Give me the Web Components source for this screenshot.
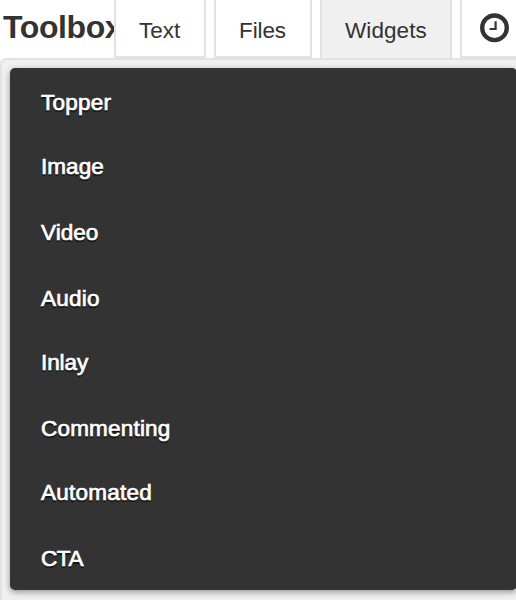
<!DOCTYPE html>
<html lang="en"><head><meta charset="utf-8"><title>Toolbox</title>
<style>
html,body{margin:0;height:600px;overflow:hidden;background:#fff;color:#333;font-family:"Liberation Sans",Arial,sans-serif}
</style></head><body>
<tool-box>
<tool-tab slot="tabs" style="--w:92px">Text</tool-tab>
<tool-tab slot="tabs" style="--w:98px;--ls:-.1px">Files</tool-tab>
<tool-tab slot="tabs" active style="--w:132px;--ls:.08px">Widgets</tool-tab>
<tool-tab slot="tabs" style="--w:70px;--pad:18px"><clock-icon></clock-icon></tool-tab>
<tool-menu>
<menu-row style="--h:64px;--ls:.25px">Topper</menu-row>
<menu-row style="--h:66px;--ls:.05px">Image</menu-row>
<menu-row style="--h:66px;--ls:.05px">Video</menu-row>
<menu-row style="--h:64px;--ls:.25px">Audio</menu-row>
<menu-row style="--h:66px;--ls:-.1px">Inlay</menu-row>
<menu-row style="--h:64px;--ls:.2px">Commenting</menu-row>
<menu-row style="--h:66px;--ls:.25px">Automated</menu-row>
<menu-row style="--h:64px;--ls:-.4px">CTA</menu-row>
</tool-menu>
</tool-box>
<script>
const define=(name,html)=>customElements.define(name,class extends HTMLElement{
  constructor(){super();this.attachShadow({mode:"open"}).innerHTML=html;}
});
define("tool-box",`<style>
:host{display:flex;flex-direction:column;height:600px;width:516px;overflow:hidden}
header{display:flex;height:58px;flex:none}
h1{margin:0;padding-left:3px;width:111px;flex:none;overflow:hidden;font:bold 32px/54px "Liberation Sans",Arial,sans-serif;letter-spacing:-.4px;white-space:nowrap}
nav{display:flex;gap:8px;flex:none}
main{box-sizing:border-box;flex:1;width:525px;border:2px solid #e2e2e2;border-bottom:0;border-radius:6px 6px 0 0;background:#f0f0f0;padding:8px}
</style><header><h1>Toolbox</h1><nav><slot name="tabs"></slot></nav></header><main><slot></slot></main>`);
define("tool-tab",`<style>
:host{box-sizing:border-box;display:block;width:var(--w);height:58px;padding-left:var(--pad,23px);border:2px solid #e2e2e2;border-top:0;background:#fff;font-size:22.5px;line-height:61px;letter-spacing:var(--ls,0);white-space:nowrap}
:host([active]){background:#f0f0f0;border-bottom-width:0}
</style><slot></slot>`);
define("clock-icon",`<style>:host{display:block;width:30px;height:30px;padding-top:13px}svg{display:block}</style>
<svg width="30" height="30" viewBox="0 0 30 30" fill="none" stroke="#333"><circle cx="14.5" cy="14.8" r="12.3" stroke-width="4.3"/><path d="M15.6 8.2V16H9.6" stroke-width="2.2"/></svg>`);
define("tool-menu",`<style>:host{display:block;box-sizing:border-box;width:507px;height:522px;padding-top:2px;border-radius:5px;background:#333;box-shadow:0 2px 6px rgba(0,0,0,.4)}</style><slot></slot>`);
define("menu-row",`<style>:host{display:block;height:var(--h);padding-left:31px;color:#fff;font-size:22.5px;line-height:66px;letter-spacing:var(--ls);-webkit-text-stroke:.7px #fff;text-shadow:0 2px 1px #111}</style><slot></slot>`);
</script></body></html>
